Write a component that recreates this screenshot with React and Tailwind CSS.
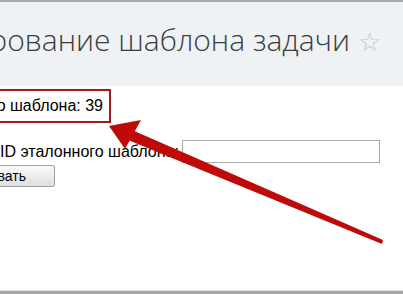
const sans = { fontFamily: '"Liberation Sans", Arial, sans-serif' };

function Arrow() {
    return (
        <svg className="absolute inset-0 pointer-events-none" width="403" height="294" viewBox="0 0 403 294">
            <polygon points="132,128 383,238 382,242 128,138" fill="#bf0a0a" />
            <polygon points="109,124 141,118 125,147" fill="#bf0a0a" />
        </svg>
    );
}

export default function App() {
    return (
        <div className="relative w-[403px] h-[294px] overflow-hidden bg-white border-t-2 border-[#a6a8aa]">
            <div className="h-[84px] bg-[#eef2f4] flex items-center justify-end pr-[22px] overflow-hidden">
                <h1 className="whitespace-nowrap text-[30px] font-light text-[#3a3d40] leading-none pb-[8px]" style={{ fontFamily: '"Open Sans", sans-serif' }}>
                    Редактирование шаблона задачи
                    <span className="ml-[8px] text-[#c3c7cb] text-[26px]" style={{ fontFamily: '"DejaVu Sans", sans-serif' }}>☆</span>
                </h1>
            </div>

            <div className="pt-[3px] text-[16px] text-black" style={sans}>
                <div className="w-[111px] h-[34px] border-y-2 border-r-2 border-[#a31c1c] flex items-center justify-end overflow-hidden pr-[6px]">
                    <span className="whitespace-nowrap">ID этого шаблона: 39</span>
                </div>

                <div className="flex items-center mt-[17px] h-[23px]">
                    <span className="whitespace-nowrap">ID эталонного шаблона:</span>
                    <input type="text" className="ml-[3px] w-[198px] h-[23px] border border-[#aaaaaa] bg-white outline-none" />
                </div>

                <div className="w-[55px] flex justify-end overflow-hidden mt-[2px]">
                    <button className="shrink-0 h-[22px] whitespace-nowrap border border-[#a0a0a0] rounded-[2px] bg-gradient-to-b from-[#fafafa] to-[#dedede] pr-[28px] pl-[28px] text-[14px] leading-none">
                        Копировать
                    </button>
                </div>
            </div>

            <div className="absolute left-0 right-0 bottom-0 h-[4px] bg-[#a8a8a8] border-t border-[#dcdcdc]" />
            <Arrow />
        </div>
    );
}
